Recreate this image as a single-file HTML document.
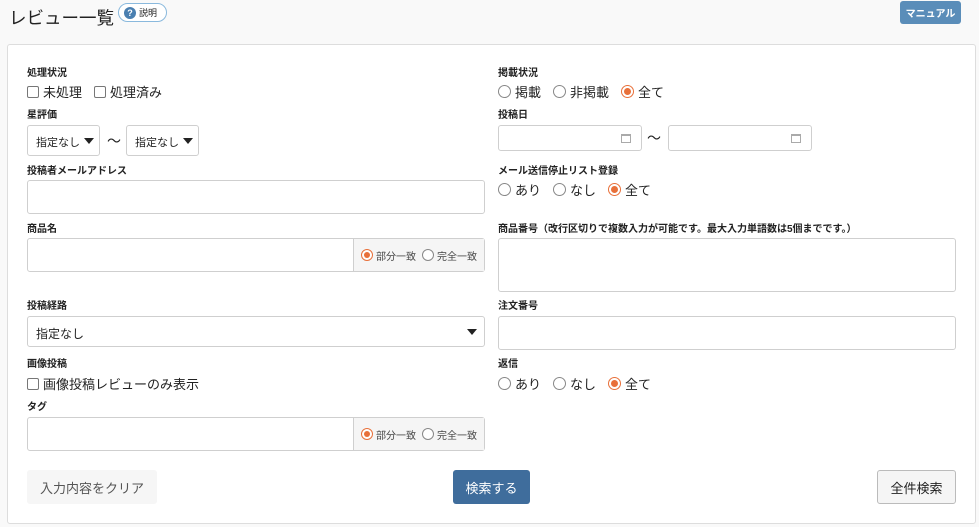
<!DOCTYPE html><html><head><meta charset="utf-8"><style>
*{box-sizing:border-box;margin:0;padding:0}
body{width:979px;height:527px;background:#f9f9f9;font-family:"Liberation Sans","Noto Sans CJK JP",sans-serif;color:#222;position:relative;overflow:hidden}
.a{position:absolute}
.lbl{position:absolute;font-size:10px;font-weight:bold;color:#222}
.box{position:absolute;background:#fff;border:1px solid #cfcfcf;border-radius:3px}
.t13{font-size:13px;position:absolute;white-space:nowrap;display:flex;align-items:center}
.cb{display:inline-block;width:12px;height:12px;border:1px solid #777;border-radius:2px;margin-right:4px;background:#fff}
.rd{display:inline-block;width:13px;height:13px;border:1px solid #888;border-radius:50%;margin-right:4px;background:#fff;position:relative}
.rd.on{border-color:#e8703a}
.rd.on:after{content:"";position:absolute;left:2px;top:2px;width:7px;height:7px;border-radius:50%;background:#e8703a}
.gap{margin-right:12px}
.caret{position:absolute;width:0;height:0;border-left:5px solid transparent;border-right:5px solid transparent;border-top:6px solid #222}
.addon{position:absolute;top:0;bottom:0;right:0;width:131px;background:#f5f5f5;border-left:1px solid #cfcfcf;font-size:10px;display:flex;align-items:center;padding-left:7px;color:#444}
.addon .rd{width:12px;height:12px;margin-right:3px}
.addon .rd.on:after{left:2px;top:2px;width:6px;height:6px}
.cal{position:absolute;width:10px;height:9px;border:1px solid #aaa;border-top-width:2px;top:8px}
</style></head><body>
<div class="a" style="left:9px;top:5px;font-size:17.5px;color:#222">レビュー一覧</div>
<div class="a" style="left:118px;top:3px;width:49px;height:19px;border:1px solid #8ab9dd;border-radius:10px;background:#fff;font-size:9px;display:flex;align-items:center;padding-left:5px"><span style="display:inline-block;width:12px;height:12px;border-radius:50%;background:#4a7fb0;color:#fff;font-size:9px;font-weight:bold;text-align:center;line-height:12px;margin-right:3px">?</span>説明</div>
<div class="a" style="left:900px;top:1px;width:61px;height:23px;background:#5a8db9;border-radius:3px;color:#fff;font-size:10px;font-weight:bold;display:flex;align-items:center;justify-content:center">マニュアル</div>
<div class="a" style="left:7px;top:44px;width:969px;height:480px;background:#fff;border:1px solid #ddd;border-radius:3px"></div>

<div class="lbl" style="left:27px;top:64px">処理状況</div>
<div class="t13" style="left:27px;top:82px"><span class="cb"></span><span class="gap">未処理</span><span class="cb"></span>処理済み</div>
<div class="lbl" style="left:27px;top:106px">星評価</div>
<div class="box" style="left:27px;top:125px;width:73px;height:31px;font-size:11px;padding:8px 0 0 8px">指定なし<span class="caret" style="right:5px;top:12px"></span></div>
<div class="a" style="left:107px;top:131px;font-size:14px">～</div>
<div class="box" style="left:126px;top:125px;width:73px;height:31px;font-size:11px;padding:8px 0 0 8px">指定なし<span class="caret" style="right:5px;top:12px"></span></div>
<div class="lbl" style="left:27px;top:162px">投稿者メールアドレス</div>
<div class="box" style="left:27px;top:180px;width:458px;height:34px"></div>
<div class="lbl" style="left:27px;top:220px">商品名</div>
<div class="box" style="left:27px;top:238px;width:458px;height:34px"><div class="addon"><span class="rd on"></span><span style="margin-right:6px">部分一致</span><span class="rd"></span>完全一致</div></div>
<div class="lbl" style="left:27px;top:297px">投稿経路</div>
<div class="box" style="left:27px;top:316px;width:458px;height:31px;font-size:12px;padding:8px 0 0 8px">指定なし<span class="caret" style="right:7px;top:12px"></span></div>
<div class="lbl" style="left:27px;top:355px">画像投稿</div>
<div class="t13" style="left:27px;top:374px"><span class="cb"></span>画像投稿レビューのみ表示</div>
<div class="lbl" style="left:27px;top:398px">タグ</div>
<div class="box" style="left:27px;top:417px;width:458px;height:34px"><div class="addon"><span class="rd on"></span><span style="margin-right:6px">部分一致</span><span class="rd"></span>完全一致</div></div>

<div class="lbl" style="left:498px;top:64px">掲載状況</div>
<div class="t13" style="left:498px;top:82px"><span class="rd"></span><span class="gap">掲載</span><span class="rd"></span><span class="gap">非掲載</span><span class="rd on"></span>全て</div>
<div class="lbl" style="left:498px;top:106px">投稿日</div>
<div class="box" style="left:498px;top:125px;width:144px;height:26px"><span class="cal" style="right:10px"></span></div>
<div class="a" style="left:647px;top:128px;font-size:14px">～</div>
<div class="box" style="left:668px;top:125px;width:144px;height:26px"><span class="cal" style="right:10px"></span></div>
<div class="lbl" style="left:498px;top:162px">メール送信停止リスト登録</div>
<div class="t13" style="left:498px;top:180px"><span class="rd"></span><span class="gap">あり</span><span class="rd"></span><span class="gap">なし</span><span class="rd on"></span>全て</div>
<div class="lbl" style="left:498px;top:220px">商品番号（改行区切りで複数入力が可能です。最大入力単語数は5個までです。）</div>
<div class="box" style="left:498px;top:238px;width:458px;height:54px"></div>
<div class="lbl" style="left:498px;top:297px">注文番号</div>
<div class="box" style="left:498px;top:316px;width:458px;height:34px"></div>
<div class="lbl" style="left:498px;top:355px">返信</div>
<div class="t13" style="left:498px;top:374px"><span class="rd"></span><span class="gap">あり</span><span class="rd"></span><span class="gap">なし</span><span class="rd on"></span>全て</div>

<div class="a" style="left:27px;top:470px;width:130px;height:34px;background:#f6f6f6;border-radius:3px;font-size:13px;color:#555;display:flex;align-items:center;justify-content:center">入力内容をクリア</div>
<div class="a" style="left:453px;top:470px;width:77px;height:34px;background:#3f6d9c;border-radius:3px;font-size:13px;color:#fff;display:flex;align-items:center;justify-content:center">検索する</div>
<div class="a" style="left:877px;top:470px;width:79px;height:34px;background:#f5f5f5;border:1px solid #bbb;border-radius:3px;font-size:13px;color:#222;display:flex;align-items:center;justify-content:center">全件検索</div>
</body></html>
